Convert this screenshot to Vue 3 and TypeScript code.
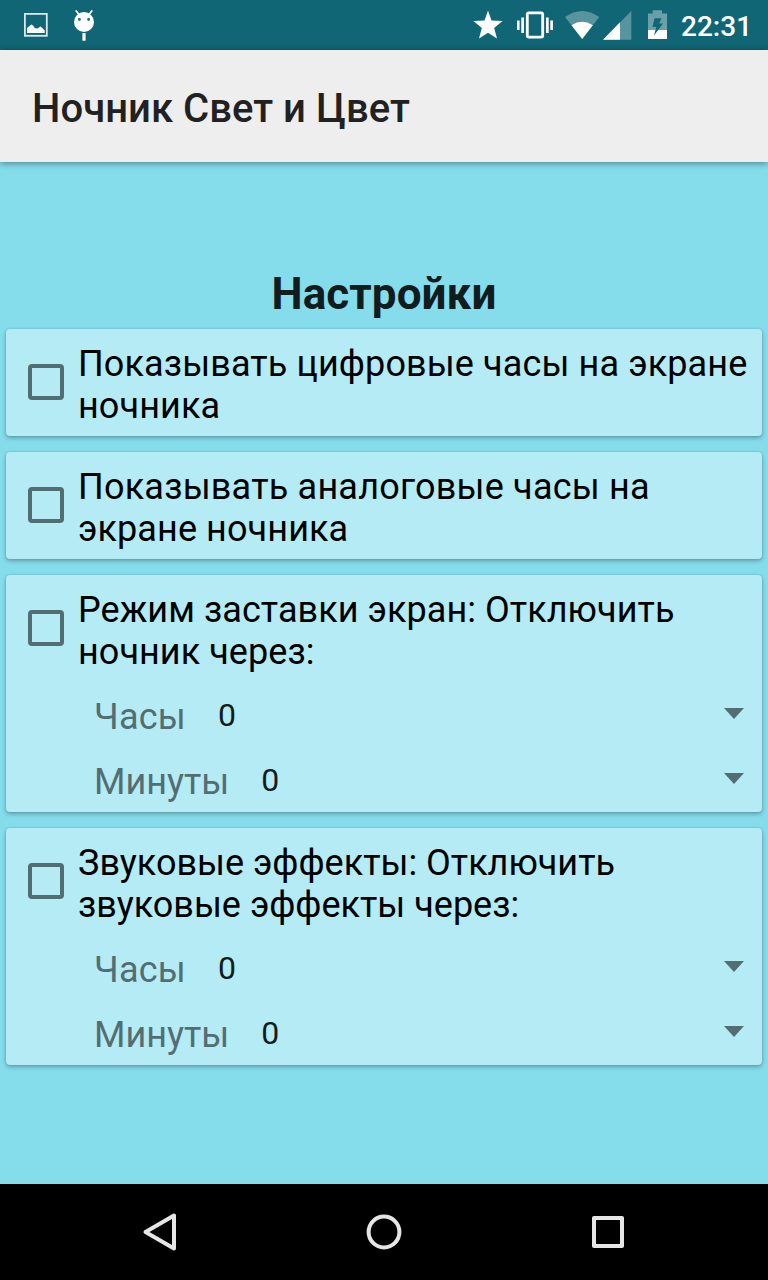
<script setup lang="ts">
interface Setting {
  id: string
  label: string
  rows: { id: string; name: string; value: number }[]
}

const timer = () => [
  { id: 'hours', name: 'Часы', value: 0 },
  { id: 'minutes', name: 'Минуты', value: 0 },
]

const settings: Setting[] = [
  { id: 'digital', label: 'Показывать цифровые часы на экране ночника', rows: [] },
  { id: 'analog', label: 'Показывать аналоговые часы на экране ночника', rows: [] },
  { id: 'saver', label: 'Режим заставки экран: Отключить ночник через:', rows: timer() },
  { id: 'sound', label: 'Звуковые эффекты: Отключить звуковые эффекты через:', rows: timer() },
]
</script>

<template>
  <div class="screen">
    <div class="status">
      <svg class="notifications" width="120" height="50" viewBox="0 0 120 50">
        <rect x="24.9" y="13.9" width="21.9" height="21.9" fill="none" stroke="#dbe8ea" stroke-width="1.8" />
        <path d="M27 33V28L29.5 26L31.3 24.6L33 25.6L35 28.2L37.5 28.4L40.5 26.6L42.5 28.2L44.7 30.5V33Z" fill="#fff" />
        <circle cx="84" cy="22" r="10" fill="#fff" />
        <path d="M79 14.5L76.2 11M89 14.5L91.8 11" stroke="#fff" stroke-width="1.8" stroke-linecap="round" />
        <circle cx="79.4" cy="19.4" r="1.4" fill="#106674" />
        <circle cx="88.6" cy="19.4" r="1.4" fill="#106674" />
        <path d="M82.4 33H85.6V40.7H82.4Z" fill="#fff" />
      </svg>
      <svg class="system" width="212" height="50" viewBox="460 0 212 50">
        <path d="M488 10.5L491.5 20.4L502.6 21L494.2 27.9L497 38.6L488 32.8L479 38.6L481.8 27.9L473.4 21L484.5 20.4Z" fill="#fff" />
        <rect x="527.3" y="12.8" width="15.4" height="24.3" rx="1.5" fill="none" stroke="#fff" stroke-width="2.8" />
        <path d="M517 20.5H519.6V30H517ZM521.3 17.5H524V33H521.3ZM546 17.5H548.7V33H546ZM550.3 20.5H553V30H550.3Z" fill="#fff" />
        <path d="M565 17Q582 5 599.3 17L582.2 39Z" fill="#fff" opacity=".3" />
        <path d="M571.5 25.2Q582 18.5 592.8 25.2L582.2 39Z" fill="#fff" />
        <path d="M631.3 11V39.8H603Z" fill="#fff" opacity=".3" />
        <path d="M620 22.3V39.8H603Z" fill="#fff" />
        <path d="M652.7 10.3H662V13.4H667V30H648V13.4H652.7Z" fill="#fff" opacity=".38" />
        <path d="M648 30H667V39H648Z" fill="#fff" />
        <path d="M654.5 18.2H661.5L659.2 23.6H663L654 35.5L656.3 27H652.6Z" fill="#106674" />
      </svg>
      <span class="clock">22:31</span>
    </div>
    <header class="toolbar">Ночник Свет и Цвет</header>
    <main class="content">
      <h1 class="heading">Настройки</h1>
      <section v-for="s in settings" :key="s.id" class="card" :class="s.id">
        <div class="option">
          <span class="box"></span>
          <span class="label">{{ s.label }}</span>
        </div>
        <div v-for="r in s.rows" :key="r.id" class="row" :class="r.id">
          <span class="name">{{ r.name }}</span>
          <span class="value">{{ r.value }}</span>
          <svg class="arrow" width="20" height="11" viewBox="0 0 20 11">
            <path d="M0 0H20L10 11Z" fill="#536e73" />
          </svg>
        </div>
      </section>
    </main>
    <nav class="nav">
      <svg width="768" height="96" viewBox="0 0 768 96" fill="none" stroke="#e6e6e6" stroke-width="4" stroke-linejoin="round">
        <path d="M145.5 48L174 31.5V64.5Z" />
        <circle cx="384" cy="48" r="15.4" />
        <rect x="594" y="34" width="28" height="28" />
      </svg>
    </nav>
  </div>
</template>

<style>
html, body { margin: 0; background: #85dceb; }
</style>

<style scoped>
.screen {
  width: 768px;
  height: 1280px;
  display: flex;
  flex-direction: column;
  overflow: hidden;
  background: #85dceb;
  font-family: Roboto, "Noto Sans", sans-serif;
}
.status {
  height: 50px;
  flex: none;
  display: flex;
  align-items: center;
  background: #106674;
}
.status svg, .nav svg { display: block; flex: none; }
.system { margin-left: auto; }
.clock {
  width: 87px;
  margin-left: 9px;
  color: #fff;
  font-size: 28px;
  line-height: 50px;
  font-weight: 500;
  padding-top: 3px;
}
.toolbar {
  height: 112px;
  flex: none;
  box-sizing: border-box;
  padding: 3px 32px 0;
  background: #eee;
  color: #212121;
  font-size: 40px;
  font-weight: 500;
  line-height: 112px;
  letter-spacing: .04px;
  white-space: nowrap;
  box-shadow: 0 1px 7px rgba(0, 0, 0, .45);
}
.content {
  flex: 1;
  padding: 106px 6px 0;
}
.heading {
  margin: 0 0 9px;
  text-align: center;
  font-size: 44px;
  line-height: 52px;
  font-weight: 700;
  letter-spacing: .08px;
  color: #111c1e;
}
.card {
  margin-bottom: 16px;
  background: #b5ebf5;
  border-radius: 4px;
  box-shadow: 0 2px 4px rgba(0, 0, 0, .28), 0 0 2px rgba(0, 0, 0, .16);
}
.option {
  height: 107px;
  box-sizing: border-box;
  display: flex;
  align-items: flex-start;
  padding: 14px 0 0 22px;
}
.box {
  flex: none;
  width: 36px;
  height: 36px;
  box-sizing: border-box;
  margin-top: 21px;
  border: 4px solid #536e73;
  border-radius: 4px;
}
.label {
  display: block;
  margin-left: 14px;
  font-size: 36px;
  line-height: 42px;
  color: #000;
}
.digital .label, .analog .label { letter-spacing: .1px; }
.analog .label::first-line { letter-spacing: .22px; }
.digital .label::first-line { letter-spacing: .12px; }
.saver .label { letter-spacing: .06px; }
.row {
  height: 65px;
  box-sizing: border-box;
  display: flex;
  align-items: flex-start;
  padding: 14px 18px 0 88px;
}
.name {
  font-size: 36px;
  line-height: 42px;
  color: #536e73;
}
.hours .name { letter-spacing: .25px; }
.value {
  margin-left: 32px;
  font-size: 32px;
  line-height: 38px;
  color: #111c1e;
}
.arrow { margin: 12px 0 0 auto; }
.nav {
  height: 96px;
  flex: none;
  background: #000;
}
</style>
